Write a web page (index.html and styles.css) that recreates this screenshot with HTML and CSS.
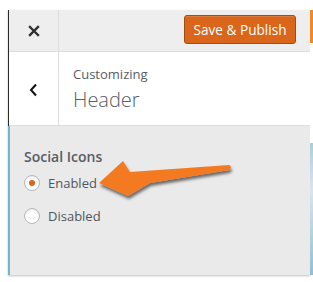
FILE: index.html
```html
<!DOCTYPE html>
<html lang="en">
<head>
    <meta charset="UTF-8">
    <meta name="viewport" content="width=device-width, initial-scale=1.0">
    <title>Customizing Header</title>
    <link rel="stylesheet" href="styles.css">
</head>
<body>
    <div class="stage">
        <div class="customizer">
            <div class="top-bar">
                <div class="close-btn">
                    <svg width="12" height="12" viewBox="0 0 12 12">
                        <path d="M2 2 L10 10 M10 2 L2 10" stroke="#2f2f2f" stroke-width="2.4" stroke-linecap="square"/>
                    </svg>
                </div>
                <div class="actions">
                    <button class="publish-btn">Save &amp; Publish</button>
                </div>
            </div>

            <div class="section-head">
                <div class="back-btn">
                    <svg width="9" height="14" viewBox="0 0 9 14">
                        <path d="M7 1.5 L2 7 L7 12.5" fill="none" stroke="#111" stroke-width="2"/>
                    </svg>
                </div>
                <div class="section-title">
                    <span class="crumb">Customizing</span>
                    <span class="title">Header</span>
                </div>
            </div>

            <div class="controls">
                <div class="control-label">Social Icons</div>
                <label class="radio-row">
                    <span class="radio checked"></span>
                    <span>Enabled</span>
                </label>
                <label class="radio-row">
                    <span class="radio"></span>
                    <span>Disabled</span>
                </label>
            </div>
        </div>
        <div class="side-strip"></div>

        <svg class="pointer" width="313" height="282" viewBox="0 0 313 282">
            <defs>
                <filter id="shade" x="-20%" y="-20%" width="140%" height="160%">
                    <feDropShadow dx="1" dy="3" stdDeviation="1.6" flood-color="#000" flood-opacity="0.55"/>
                </filter>
            </defs>
            <path d="M99 183 L123 161 L130 172 L229 165 Q233 167 229 170 L150 183 L128 196 Z" fill="#f47a22" filter="url(#shade)"/>
        </svg>
    </div>
</body>
</html>
```

FILE: styles.css
```css
body {
    margin: 0;
    background: #ffffff;
    font-family: 'Open Sans', 'Liberation Sans', sans-serif;
}

.stage {
    position: relative;
    display: flex;
    padding: 10px 0 0 8px;
    width: 305px;
    height: 272px;
}

.customizer {
    width: 302px;
    height: 265px;
    display: flex;
    flex-direction: column;
    border-left: 1px solid #2a2a2a;
    box-shadow: 0 1px 2px rgba(0, 0, 0, 0.25);
    background: #eaeaea;
}

.top-bar {
    display: flex;
    height: 41px;
    background: #eeeeee;
    border-bottom: 1px solid #dddddd;
}

.close-btn {
    width: 49px;
    display: flex;
    align-items: center;
    justify-content: center;
    border-right: 1px solid #dddddd;
}

.actions {
    flex-grow: 1;
    display: flex;
    justify-content: flex-end;
    align-items: center;
    padding-right: 14px;
    padding-bottom: 2px;
}

.publish-btn {
    font-family: inherit;
    font-size: 13.6px;
    color: #ffffff;
    background: #d9661b;
    border: 1px solid #a24e12;
    border-radius: 3px;
    height: 29px;
    width: 112px;
    padding: 0;
    box-shadow: inset 0 1px 0 rgba(255, 255, 255, 0.15);
}

.section-head {
    display: flex;
    height: 73px;
    background: #ffffff;
    border-bottom: 1px solid #dddddd;
}

.back-btn {
    width: 49px;
    display: flex;
    align-items: center;
    justify-content: center;
    padding-top: 2px;
    border-right: 1px solid #dddddd;
}

.section-title {
    display: flex;
    flex-direction: column;
    padding: 14px 0 0 14px;
}

.crumb {
    font-size: 13px;
    color: #555d66;
    line-height: 16px;
}

.title {
    font-size: 20px;
    font-weight: 300;
    color: #555d66;
    line-height: 26px;
    margin-top: 5px;
}

.controls {
    flex-grow: 1;
    padding: 21px 0 0 14px;
    border-left: 2px solid #74b6c4;
    margin-left: -1px;
}

.control-label {
    font-size: 14px;
    font-weight: 600;
    color: #555d66;
    line-height: 20px;
    margin-bottom: 6px;
}

.radio-row {
    display: flex;
    align-items: center;
    gap: 8px;
    font-size: 13px;
    color: #50555f;
    height: 20px;
    margin-bottom: 13px;
}

.radio {
    width: 14px;
    height: 14px;
    border: 1px solid #b4b9be;
    border-radius: 50%;
    background: #ffffff;
    box-shadow: inset 0 1px 2px rgba(0, 0, 0, 0.1);
    display: flex;
    align-items: center;
    justify-content: center;
}

.radio.checked::after {
    content: '';
    width: 6px;
    height: 6px;
    border-radius: 50%;
    background: #d9661b;
}

.side-strip {
    width: 3px;
    height: 265px;
    background: linear-gradient(#f08a24 0, #f08a24 33px, #ffffff 33px, #ffffff 133px, #a9cde0 133px, #d8e6ea 180px, #8fbfd8 265px);
}

.pointer {
    position: absolute;
    left: 0;
    top: 0;
    pointer-events: none;
}
```
